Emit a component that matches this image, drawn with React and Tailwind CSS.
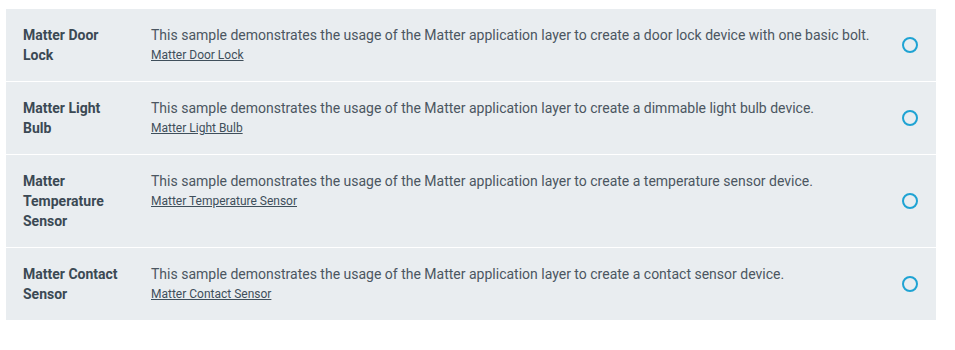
const SAMPLES = [
  {
    title: 'Matter Door Lock',
    desc: 'This sample demonstrates the usage of the Matter application layer to create a door lock device with one basic bolt.',
  },
  {
    title: 'Matter Light Bulb',
    desc: 'This sample demonstrates the usage of the Matter application layer to create a dimmable light bulb device.',
  },
  {
    title: 'Matter Temperature Sensor',
    desc: 'This sample demonstrates the usage of the Matter application layer to create a temperature sensor device.',
  },
  {
    title: 'Matter Contact Sensor',
    desc: 'This sample demonstrates the usage of the Matter application layer to create a contact sensor device.',
  },
];

function Radio() {
  return <span className="block w-4 h-4 rounded-full border-2 border-[#1fa3d3]" />;
}

export default function App() {
  return (
    <div className="w-[955px] h-[350px] bg-white pt-[9px] pl-[6px]" style={{ fontFamily: 'Roboto, "Liberation Sans", sans-serif' }}>
      <div className="w-[930px] flex flex-col gap-px">
        {SAMPLES.map((s) => (
          <div key={s.title} className="flex items-stretch bg-[#e9edf0]">
            <div className="w-[145px] shrink-0 pl-[17px] pr-[24px] py-4">
              <div className="text-[14px] leading-5 font-bold text-[#3b4954]">{s.title}</div>
            </div>
            <div className="flex-1 py-4 pr-4">
              <p className="text-[14px] leading-5 text-[#4b5661]">{s.desc}</p>
              <a href="#" className="block text-[12px] leading-5 text-[#3f4f5b] underline">{s.title}</a>
            </div>
            <div className="flex items-center pr-[18px] pl-2">
              <Radio />
            </div>
          </div>
        ))}
      </div>
    </div>
  );
}
